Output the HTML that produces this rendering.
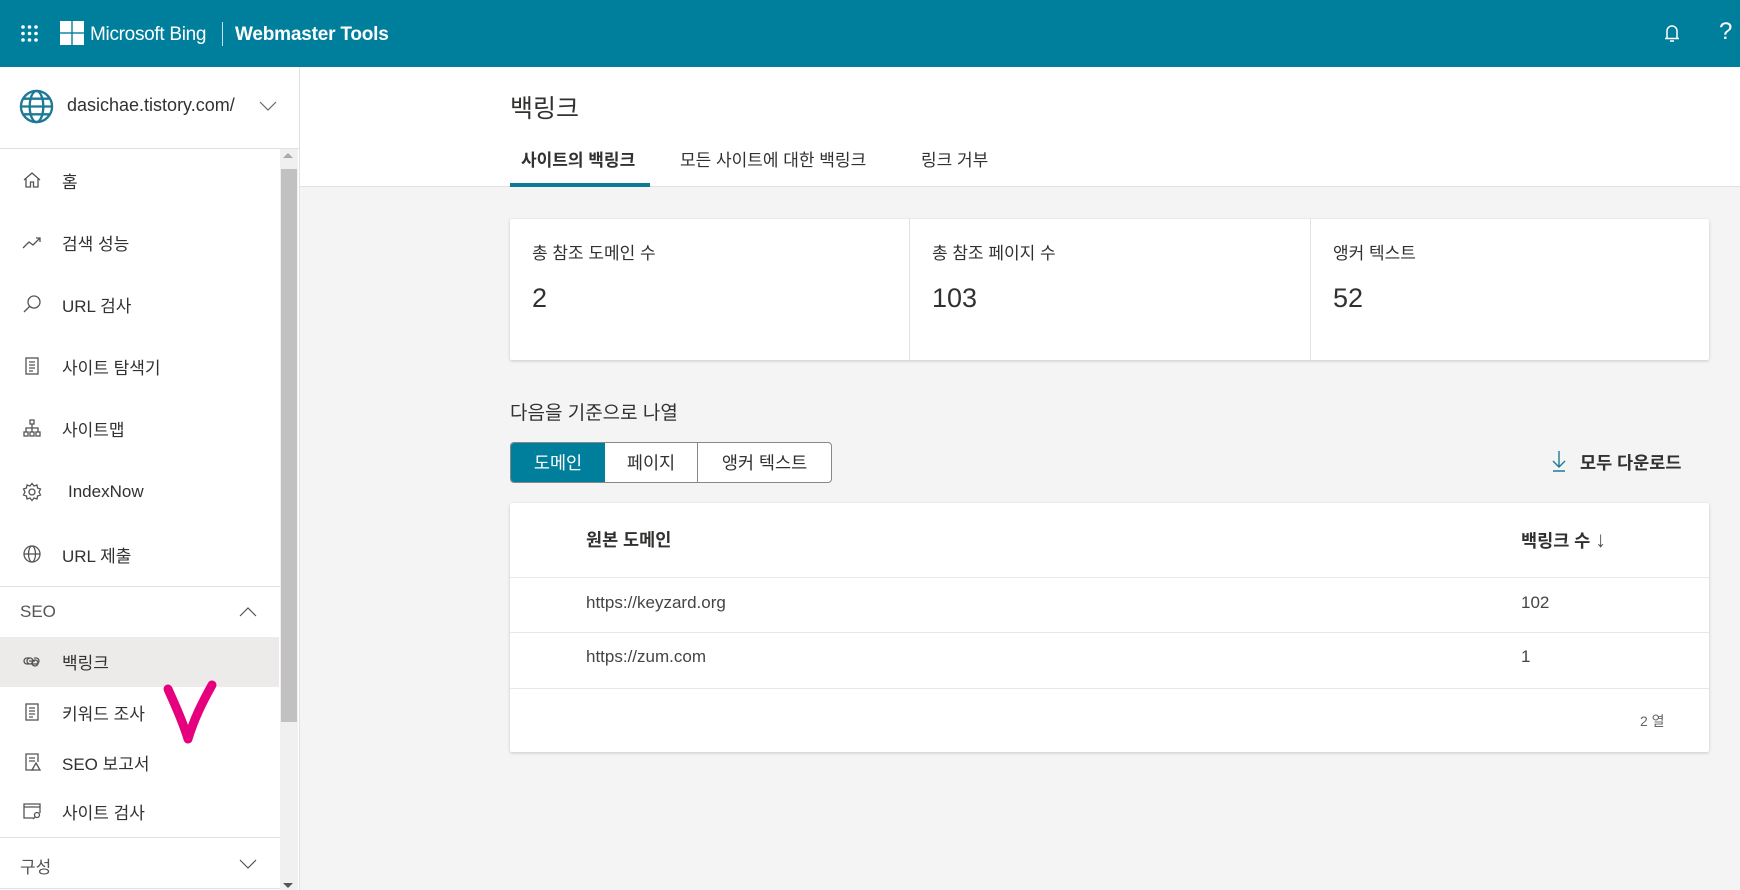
<!DOCTYPE html>
<html><head><meta charset="utf-8"><style>
*{box-sizing:border-box;margin:0;padding:0}
body{width:1740px;height:890px;overflow:hidden;background:#f4f4f4;font-family:"Liberation Sans","Noto Sans CJK KR",sans-serif;color:#323130;position:relative}
.abs{position:absolute}
.hdr{left:0;top:0;width:1740px;height:67px;background:#007f9c;color:#fff}
.side{left:0;top:67px;width:300px;height:823px;background:#fff;border-right:1px solid #e1e1e1}
.nav{position:absolute;left:22px;font-size:17px;display:flex;align-items:center;height:30px;margin-top:-15px}
.nav svg{width:20px;height:20px;margin-right:20px;fill:none;stroke:#555;stroke-width:1.3}
.sep{position:absolute;left:0;width:280px;height:1px;background:#e1e1e1}
.card{background:#fff;box-shadow:0 1px 3px rgba(0,0,0,.18);border-radius:2px}
.lbl{font-size:17px;color:#323130}
.val{font-size:27px;color:#323130}
.line{position:absolute;left:0;right:0;height:1px;background:#e8e8e8}
</style></head><body>
<div class="abs hdr">
  <svg class="abs" style="left:20px;top:24px" width="19" height="19" viewBox="0 0 19 19" fill="#fff"><circle cx="3" cy="3" r="1.8"/><circle cx="9.5" cy="3" r="1.8"/><circle cx="16" cy="3" r="1.8"/><circle cx="3" cy="9.5" r="1.8"/><circle cx="9.5" cy="9.5" r="1.8"/><circle cx="16" cy="9.5" r="1.8"/><circle cx="3" cy="16" r="1.8"/><circle cx="9.5" cy="16" r="1.8"/><circle cx="16" cy="16" r="1.8"/></svg>
  <svg class="abs" style="left:60px;top:21px" width="24" height="24" viewBox="0 0 24 24" fill="#fff"><rect x="0" y="0" width="11.3" height="11.3"/><rect x="12.7" y="0" width="11.3" height="11.3"/><rect x="0" y="12.7" width="11.3" height="11.3"/><rect x="12.7" y="12.7" width="11.3" height="11.3"/></svg>
  <div class="abs" style="left:90px;top:24px;font-size:19px;letter-spacing:-0.3px">Microsoft Bing</div>
  <div class="abs" style="left:222px;top:22px;width:1px;height:24px;background:#cde"></div>
  <div class="abs" style="left:235px;top:24px;font-size:19px;font-weight:bold;letter-spacing:-0.2px">Webmaster Tools</div>
  <svg class="abs" style="left:1664px;top:24px" width="16" height="20" viewBox="0 0 16 20" fill="none" stroke="#fff" stroke-width="1.5"><path d="M3 14V7a5 5 0 0 1 10 0v7M1 14.5h14M6 17h4"/></svg>
  <div class="abs" style="left:1719px;top:18px;font-size:24px">?</div>
</div>

<div class="abs side">
  <svg class="abs" style="left:19px;top:22px" width="35" height="35" viewBox="0 0 36 36" fill="none" stroke="#1c7a96" stroke-width="2.4"><circle cx="18" cy="18" r="16"/><ellipse cx="18" cy="18" rx="7" ry="16"/><path d="M2 18h32M5 10h26M5 26h26"/></svg>
  <div class="abs" style="left:67px;top:28px;font-size:18px">dasichae.tistory.com/</div>
  <svg class="abs" style="left:259px;top:34px" width="18" height="10" viewBox="0 0 18 10" fill="none" stroke="#666" stroke-width="1.2"><path d="M1 1l8 8 8-8"/></svg>
  <div class="sep" style="top:81px;width:300px"></div>
  <div class="abs" style="left:280px;top:82px;width:18px;height:741px;background:#f0f0f0"></div>
  <div class="abs" style="left:283px;top:86px;width:0;height:0;border-left:5px solid transparent;border-right:5px solid transparent;border-bottom:5px solid #aaa"></div>
  <div class="abs" style="left:281px;top:102px;width:16px;height:553px;background:#c1c1c1"></div>
  <div class="abs" style="left:283px;top:816px;width:0;height:0;border-left:5px solid transparent;border-right:5px solid transparent;border-top:5px solid #555"></div>

  <div class="nav" style="top:113px"><svg viewBox="0 0 20 20"><path d="M2 10L10 3l8 7M4 8.5V17h4.5v-5h3v5H16V8.5"/></svg>홈</div>
  <div class="nav" style="top:175px"><svg viewBox="0 0 20 20"><path d="M1 16l6-6 4 3 7-7M14 6h4v4"/></svg>검색 성능</div>
  <div class="nav" style="top:237px"><svg viewBox="0 0 20 20"><circle cx="12" cy="8" r="6"/><path d="M7.5 12.5L2 18"/></svg>URL 검사</div>
  <div class="nav" style="top:299px"><svg viewBox="0 0 20 20"><rect x="4" y="2" width="12" height="16"/><path d="M7 6h6M7 9h6M7 12h6M7 15h4"/></svg>사이트 탐색기</div>
  <div class="nav" style="top:361px"><svg viewBox="0 0 20 20"><rect x="8" y="2" width="4" height="4"/><rect x="2" y="14" width="4" height="4"/><rect x="8" y="14" width="4" height="4"/><rect x="14" y="14" width="4" height="4"/><path d="M10 6v8M4 14v-4h12v4"/></svg>사이트맵</div>
  <div class="nav" style="top:425px"><svg viewBox="0 0 20 20"><circle cx="10" cy="10" r="3"/><path d="M10 1.5l2 2.5 3-1 .5 3 3 1-1.5 3 1.5 3-3 1-.5 3-3-1-2 2.5-2-2.5-3 1-.5-3-3-1 1.5-3-1.5-3 3-1 .5-3 3 1z"/></svg><span style="margin-left:6px">IndexNow</span></div>
  <div class="nav" style="top:487px"><svg viewBox="0 0 20 20"><circle cx="10" cy="10" r="8"/><ellipse cx="10" cy="10" rx="3.5" ry="8"/><path d="M2 10h16"/></svg>URL 제출</div>
  <div class="sep" style="top:519px"></div>
  <div class="abs" style="left:20px;top:535px;font-size:17px;color:#555">SEO</div>
  <svg class="abs" style="left:239px;top:540px" width="18" height="10" viewBox="0 0 18 10" fill="none" stroke="#555" stroke-width="1.2"><path d="M1 9l8-8 8 8"/></svg>
  <div class="abs" style="left:0;top:570px;width:279px;height:50px;background:#edebe9"></div>
  <div class="nav" style="top:594px"><svg viewBox="0 0 20 20"><path d="M8 7H5a3 3 0 0 0 0 6h2M9 13h5a3 3 0 0 0 0-6h-2M7 10h6"/><circle cx="8" cy="10" r="3"/><circle cx="13" cy="12" r="3"/></svg>백링크</div>
  <svg class="abs" style="left:160px;top:610px" width="70" height="70" viewBox="0 0 70 70" fill="none" stroke="#e6007e" stroke-width="9" stroke-linecap="round" stroke-linejoin="round"><path d="M8 12c6 14 14 30 20 50 6-20 14-36 24-54"/></svg>
  <div class="nav" style="top:645px"><svg viewBox="0 0 20 20"><rect x="4" y="2" width="12" height="16"/><path d="M7 6h6M7 9h6M7 12h6M7 15h4"/></svg>키워드 조사</div>
  <div class="nav" style="top:695px"><svg viewBox="0 0 20 20"><path d="M12 18H4V2h12v8M7 6h6M7 9h6"/><path d="M14 11l4 7h-8z"/></svg>SEO 보고서</div>
  <div class="nav" style="top:744px"><svg viewBox="0 0 20 20"><path d="M11 17H2V3h16v9M2 6h16"/><circle cx="15" cy="14" r="2.5"/><path d="M13 16l-2 2"/></svg>사이트 검사</div>
  <div class="sep" style="top:770px"></div>
  <div class="abs" style="left:20px;top:786px;font-size:17px;color:#555">구성</div>
  <svg class="abs" style="left:239px;top:792px" width="18" height="10" viewBox="0 0 18 10" fill="none" stroke="#555" stroke-width="1.2"><path d="M1 1l8 8 8-8"/></svg>
  <div class="sep" style="top:821px"></div>
</div>

<div class="abs" style="left:300px;top:67px;width:1440px;height:120px;background:#fff;border-bottom:1px solid #e1e1e1"></div>
<div class="abs" style="left:510px;top:89px;font-size:25px">백링크</div>
<div class="abs" style="left:521px;top:146px;font-size:17px;font-weight:bold">사이트의 백링크</div>
<div class="abs" style="left:680px;top:146px;font-size:17px">모든 사이트에 대한 백링크</div>
<div class="abs" style="left:921px;top:146px;font-size:17px">링크 거부</div>
<div class="abs" style="left:510px;top:183px;width:140px;height:4px;background:#0e7a93"></div>

<div class="abs card" style="left:510px;top:219px;width:1199px;height:141px">
  <div class="abs" style="left:399px;top:0;width:1px;height:141px;background:#e1e1e1"></div>
  <div class="abs" style="left:800px;top:0;width:1px;height:141px;background:#e1e1e1"></div>
  <div class="abs lbl" style="left:22px;top:20px">총 참조 도메인 수</div>
  <div class="abs val" style="left:22px;top:64px">2</div>
  <div class="abs lbl" style="left:422px;top:20px">총 참조 페이지 수</div>
  <div class="abs val" style="left:422px;top:64px">103</div>
  <div class="abs lbl" style="left:823px;top:20px">앵커 텍스트</div>
  <div class="abs val" style="left:823px;top:64px">52</div>
</div>

<div class="abs" style="left:510px;top:398px;font-size:19px">다음을 기준으로 나열</div>
<div class="abs" style="left:510px;top:442px;width:322px;height:41px;border:1px solid #8a8886;border-radius:4px;background:#fff;overflow:hidden;display:flex;font-size:17.5px">
  <div style="width:94px;background:#007f9c;color:#fff;display:flex;align-items:center;justify-content:center">도메인</div>
  <div style="width:93px;border-right:1px solid #8a8886;display:flex;align-items:center;justify-content:center">페이지</div>
  <div style="flex:1;display:flex;align-items:center;justify-content:center">앵커 텍스트</div>
</div>
<svg class="abs" style="left:1552px;top:450px" width="14" height="22" viewBox="0 0 14 22" fill="none" stroke="#1c7a96" stroke-width="1.4"><path d="M7 1v16M1 11l6 6 6-6M1 21h12"/></svg>
<div class="abs" style="left:1580px;top:450px;font-size:17.5px;font-weight:bold">모두 다운로드</div>

<div class="abs card" style="left:510px;top:503px;width:1199px;height:249px">
  <div class="abs" style="left:76px;top:24px;font-size:17.5px;font-weight:bold">원본 도메인</div>
  <div class="abs" style="left:1011px;top:24px;font-size:17.5px;font-weight:bold">백링크 수 <span style="font-weight:normal;font-size:22px;color:#555">↓</span></div>
  <div class="line" style="top:74px"></div>
  <div class="abs" style="left:76px;top:90px;font-size:17px;color:#444">https://keyzard.org</div>
  <div class="abs" style="left:1011px;top:90px;font-size:17px;color:#444">102</div>
  <div class="line" style="top:129px"></div>
  <div class="abs" style="left:76px;top:144px;font-size:17px;color:#444">https://zum.com</div>
  <div class="abs" style="left:1011px;top:144px;font-size:17px;color:#444">1</div>
  <div class="line" style="top:185px"></div>
  <div class="abs" style="left:1130px;top:208px;font-size:14px;color:#666">2 열</div>
</div>
</body></html>
